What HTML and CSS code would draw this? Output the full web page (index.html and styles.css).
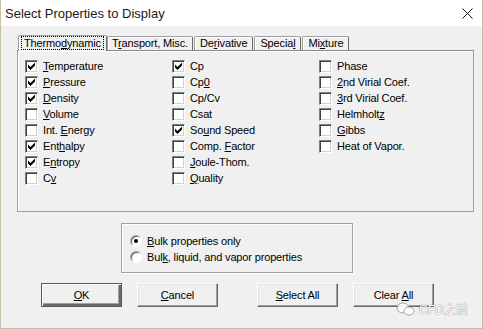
FILE: index.html
```html
<!DOCTYPE html>
<html lang="en">
  <head>
    <meta charset="UTF-8" />
    <title>Select Properties to Display</title>
    <link rel="stylesheet" href="styles.css">
  </head>
  <body>
    <div class="window">
      <header class="titlebar">
        <span class="title">Select Properties to Display</span>
        <svg class="close" width="11" height="11" viewBox="0 0 11 11">
          <path d="M0.5 0.5 L10.5 10.5 M10.5 0.5 L0.5 10.5" stroke="#111" stroke-width="1" fill="none" />
        </svg>
      </header>

      <div class="content">
        <nav class="tabs">
          <div class="tab active"><span class="focus">Thermo<u>d</u>ynamic</span></div>
          <div class="tab tight">T<u>r</u>ansport, Misc.</div>
          <div class="tab">De<u>r</u>ivative</div>
          <div class="tab">Specia<u>l</u></div>
          <div class="tab">Mi<u>x</u>ture</div>
        </nav>

        <section class="panel">
          <div class="col">
            <label class="check"><span class="box on"></span><span><u>T</u>emperature</span></label>
            <label class="check"><span class="box on"></span><span><u>P</u>ressure</span></label>
            <label class="check"><span class="box on"></span><span><u>D</u>ensity</span></label>
            <label class="check"><span class="box"></span><span><u>V</u>olume</span></label>
            <label class="check"><span class="box"></span><span>Int. <u>E</u>nergy</span></label>
            <label class="check"><span class="box on"></span><span>Ent<u>h</u>alpy</span></label>
            <label class="check"><span class="box on"></span><span>E<u>n</u>tropy</span></label>
            <label class="check"><span class="box"></span><span>C<u>v</u></span></label>
          </div>
          <div class="col">
            <label class="check"><span class="box on"></span><span>Cp</span></label>
            <label class="check"><span class="box"></span><span>Cp<u>0</u></span></label>
            <label class="check"><span class="box"></span><span>Cp/Cv</span></label>
            <label class="check"><span class="box"></span><span>Csat</span></label>
            <label class="check"><span class="box on"></span><span>So<u>u</u>nd Speed</span></label>
            <label class="check"><span class="box"></span><span>Comp. <u>F</u>actor</span></label>
            <label class="check"><span class="box"></span><span><u>J</u>oule-Thom.</span></label>
            <label class="check"><span class="box"></span><span><u>Q</u>uality</span></label>
          </div>
          <div class="col">
            <label class="check"><span class="box"></span><span>Phase</span></label>
            <label class="check"><span class="box"></span><span><u>2</u>nd Virial Coef.</span></label>
            <label class="check"><span class="box"></span><span><u>3</u>rd Virial Coef.</span></label>
            <label class="check"><span class="box"></span><span>Helmholt<u>z</u></span></label>
            <label class="check"><span class="box"></span><span><u>G</u>ibbs</span></label>
            <label class="check"><span class="box"></span><span>Heat of Vapor.</span></label>
          </div>
        </section>

        <div class="group">
          <label class="radio"><span class="dot on"></span><span><u>B</u>ulk properties only</span></label>
          <label class="radio"><span class="dot"></span><span>Bul<u>k</u>, liquid, and vapor properties</span></label>
        </div>

        <div class="buttons">
          <button class="btn default"><u>O</u>K</button>
          <button class="btn"><u>C</u>ancel</button>
          <button class="btn spaced"><u>S</u>elect All</button>
          <button class="btn">Clear <u>A</u>ll</button>
        </div>
      </div>

      <div class="watermark">
        <svg width="20" height="14" viewBox="0 0 20 14">
          <ellipse cx="7" cy="6" rx="6" ry="5" fill="#fff" stroke="#9a9a9a" stroke-width="1" />
          <ellipse cx="13" cy="9" rx="5" ry="4" fill="#fff" stroke="#9a9a9a" stroke-width="1" />
        </svg>
        <span>CFD之道</span>
      </div>
    </div>
  </body>
</html>
```

FILE: styles.css
```css
html, body {
  margin: 0;
  padding: 0;
}
body {
  font-family: "Liberation Sans", Arial, sans-serif;
  font-size: 11px;
  letter-spacing: -0.15px;
  color: #000;
}
u {
  text-decoration-thickness: 1px;
  text-underline-offset: 1px;
}
.window {
  position: relative;
  width: 483px;
  height: 329px;
  box-sizing: border-box;
  border: 1px solid #c8bea6;
  border-top: none;
  background-color: #f0f0f0;
  overflow: hidden;
}
/*****************************************
    TITLE BAR
*****************************************/
.titlebar {
  height: 26px;
  background-color: #fff;
  display: flex;
  align-items: center;
  justify-content: space-between;
  padding: 0 9px 0 4px;
}
.title {
  font-size: 13px;
  letter-spacing: 0;
  color: #1a1a1a;
}
.close {
  display: block;
  margin-top: 1px;
}
/*****************************************
    TABS
*****************************************/
.content {
  padding-top: 9px;
}
.tabs {
  display: flex;
  align-items: flex-end;
  height: 15px;
  margin-left: 17px;
  position: relative;
  z-index: 2;
}
.tab {
  height: 14px;
  line-height: 13px;
  box-sizing: border-box;
  padding: 0 5px;
  margin-right: 1px;
  border: 1px solid #a0a0a0;
  border-bottom: none;
  border-right-color: #696969;
  box-shadow: inset 1px 1px #fff;
  border-radius: 2px 2px 0 0;
  white-space: nowrap;
}
.tab.tight {
  padding: 0 4px;
}
.tab.active {
  height: 16px;
  margin-bottom: -1px;
  margin-right: 0;
  padding: 1px 3px 0 3px;
  background-color: #f0f0f0;
  line-height: 12px;
}
.focus {
  display: inline-block;
  padding: 0 2px;
  outline: 1px dotted #000;
  outline-offset: 0;
}
/*****************************************
    PANEL
*****************************************/
.panel {
  height: 162px;
  box-sizing: border-box;
  margin: 0 8px 0 16px;
  padding: 7px 0 0 7px;
  border: 1px solid #a0a0a0;
  border-top-color: #8a8a8a;
  box-shadow: inset 1px 1px #fff;
  display: grid;
  grid-template-columns: 147px 147px 1fr;
}
.check,
.radio {
  display: flex;
  align-items: center;
  gap: 5px;
  height: 16px;
  white-space: nowrap;
}
.box {
  width: 13px;
  height: 13px;
  box-sizing: border-box;
  border: 1px solid;
  border-color: #808080 #fff #fff #808080;
  box-shadow: inset 1px 1px #404040, inset -1px -1px #d4d0c8;
  background-color: #fff;
  display: flex;
  align-items: center;
  justify-content: center;
  flex-shrink: 0;
}
.box.on::after {
  content: "";
  display: block;
  width: 7px;
  height: 7px;
  background-color: #000;
  clip-path: polygon(0 2px, 2.5px 4.5px, 7px 0, 7px 3px, 2.5px 7.5px, 0 5px);
}
/*****************************************
    RADIO GROUP
*****************************************/
.group {
  width: 232px;
  height: 50px;
  box-sizing: border-box;
  margin: 11px 0 0 120px;
  padding: 9px 0 0 8px;
  border: 1px solid #a0a0a0;
  box-shadow: inset 1px 1px #fff, 1px 1px #fff;
}
.dot {
  width: 12px;
  height: 12px;
  box-sizing: border-box;
  border-radius: 50%;
  border: 1px solid;
  border-color: #a0a0a0 #fff #fff #a0a0a0;
  box-shadow: inset 1px 1px #696969;
  background-color: #fff;
  display: flex;
  align-items: center;
  justify-content: center;
  flex-shrink: 0;
}
.dot.on::after {
  content: "";
  width: 4px;
  height: 4px;
  border-radius: 50%;
  background-color: #000;
}
/*****************************************
    BUTTONS
*****************************************/
.buttons {
  display: flex;
  gap: 15px;
  margin: 10px 0 0 40px;
}
.btn {
  width: 81px;
  height: 24px;
  box-sizing: border-box;
  font-family: inherit;
  font-size: 11px;
  letter-spacing: inherit;
  color: #000;
  background-color: #f0f0f0;
  border: 1px solid;
  border-color: #fff #696969 #696969 #fff;
  box-shadow: inset -1px -1px #a0a0a0, inset 1px 1px #e3e3e3;
  padding: 0;
  margin: 0;
}
.btn.default {
  border: 1px solid #5a5a5a;
  box-shadow: inset 1px 1px #fff, inset -2px -2px #696969, inset -3px -3px #a0a0a0;
}
.btn.spaced {
  margin-left: 24px;
}
/*****************************************
    WATERMARK
*****************************************/
.watermark {
  position: absolute;
  left: 395px;
  top: 300px;
  display: flex;
  align-items: center;
  gap: 3px;
  font-family: "Liberation Sans", "Noto Sans CJK SC", sans-serif;
  font-size: 12px;
  letter-spacing: 0;
  color: #fff;
  text-shadow: 0 0 1px #888, 0 0 1px #888;
  opacity: 0.9;
}
```
